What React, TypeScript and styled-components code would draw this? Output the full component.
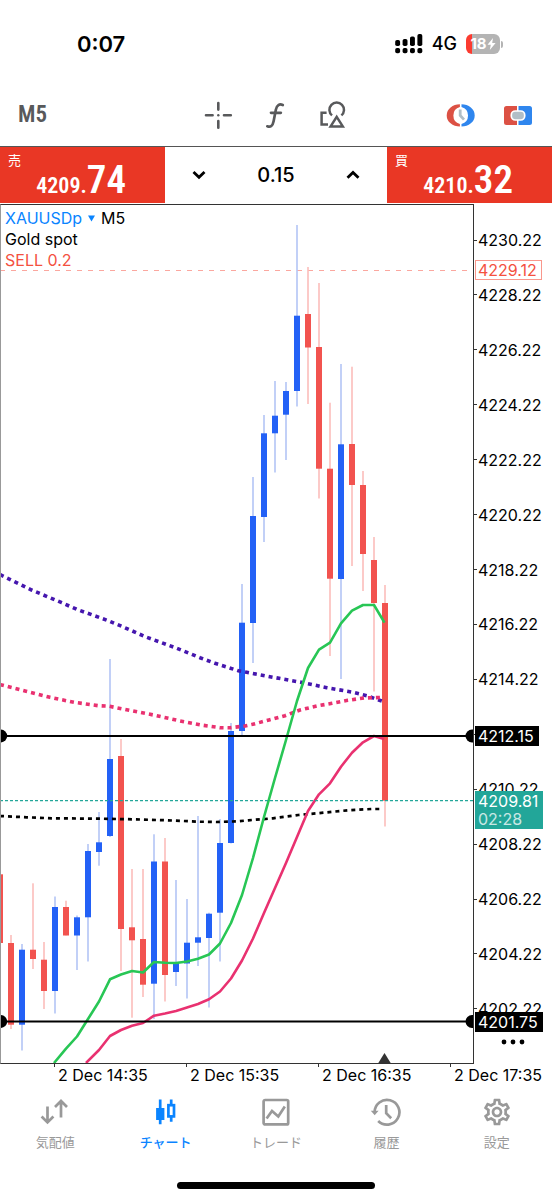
import React from 'react';
import styled, { createGlobalStyle } from 'styled-components';
import { MdOutlineSettings } from 'react-icons/md';

const SANS = `Inter, "Noto Sans CJK JP", sans-serif`;
const NARROW = `"Liberation Sans Narrow", "Roboto Condensed", Roboto, sans-serif`;

const GlobalStyle = createGlobalStyle`
  * { box-sizing: border-box; }
  body { margin: 0; background: #fff; color: #000; font-family: ${SANS}; }
  button, input { font: inherit; color: inherit; background: none; border: 0; padding: 0; margin: 0; border-radius: 0; }
  button { cursor: pointer; }
`;

const Screen = styled.main`
  width: 100%;
  overflow: hidden;
`;

const StatusBar = styled.header`
  display: flex;
  justify-content: space-between;
  align-items: center;
  height: 88px;
  padding: 0 49px 0 77px;
`;

const Clock = styled.time`
  font-size: 22px;
  font-weight: 600;
  line-height: 28px;
`;

const StatusGroup = styled.div`
  display: flex;
  align-items: center;
  gap: 9px;
`;

const Network = styled.span`
  font-size: 18px;
  font-weight: 500;
  line-height: 24px;
`;

const BatteryWrap = styled.div`
  display: flex;
  align-items: center;
  gap: 1px;
`;

const Battery = styled.div`
  display: flex;
  align-items: center;
  justify-content: center;
  width: 34px;
  height: 20px;
  border-radius: 6px;
  background: linear-gradient(90deg, #fb3b30 6px, #b4b4b4 6px);
  color: #fff;
  font-size: 15px;
  font-weight: 700;
  line-height: 20px;
`;

const BatteryTip = styled.i`
  width: 2px;
  height: 7px;
  border-radius: 0 2px 2px 0;
  background: #b4b4b4;
`;

const Toolbar = styled.nav`
  display: grid;
  grid-template-columns: 1fr auto 1fr;
  align-items: center;
  height: 58px;
  padding: 0 20px 4px 18px;
  color: #58595b;
`;

const Timeframe = styled.button`
  justify-self: start;
  font-family: ${NARROW};
  font-size: 23px;
  font-weight: 600;
  line-height: 28px;
`;

const ToolGroup = styled.div<{ $end?: boolean }>`
  display: flex;
  gap: 29px;
  justify-self: ${(p) => (p.$end ? 'end' : 'center')};
`;

const IconButton = styled.button`
  display: block;
  width: 28px;
  height: 28px;
  svg { display: block; overflow: visible; }
`;

const TradePanel = styled.section`
  display: grid;
  grid-template-columns: minmax(0, 165fr) minmax(0, 222fr) minmax(0, 165fr);
  grid-template-rows: 56px;
  border-top: 1px solid #555;
  padding-bottom: 1px;
`;

const QuoteButton = styled.button`
  display: flex;
  flex-direction: column;
  justify-content: flex-start;
  padding: 5px 39px 0 8px;
  background: #e93725;
  color: #fff;
  text-align: left;
`;

const QuoteSide = styled.span`
  height: 8px;
  font-size: 13px;
  line-height: 16px;
`;

const QuotePrice = styled.span`
  display: flex;
  justify-content: flex-end;
  align-items: baseline;
  width: 100%;
  font-family: ${NARROW};
  font-weight: 600;
  font-size: 22px;
  line-height: 40px;
`;

const Pips = styled.span`
  font-size: 39px;
`;

const VolumeBox = styled.div`
  display: flex;
  align-items: center;
  justify-content: space-between;
`;

const StepButton = styled.button`
  display: grid;
  place-items: center;
  flex: none;
  width: 68px;
  height: 48px;
`;

const VolumeInput = styled.input`
  flex: 1;
  width: 0;
  min-width: 0;
  text-align: center;
  font-size: 20px;
  font-weight: 500;
  line-height: 28px;
  outline: none;
`;

const ChartArea = styled.section`
  display: grid;
  grid-template-columns: 474fr 78fr;
`;

const Plot = styled.div`
  position: relative;
  border: 1px solid #333;
  border-left-color: #999;
  svg { display: block; width: 100%; height: auto; }
`;

const ChartHeading = styled.div`
  position: absolute;
  top: 3px;
  left: 4px;
  font-size: 16px;
  line-height: 21px;
`;

const SymbolButton = styled.button`
  display: flex;
  align-items: center;
  gap: 6px;
`;

const SymbolName = styled.span`
  color: #0a84ff;
`;

const OrderLabel = styled.div`
  color: #f4513f;
`;

const PriceAxis = styled.div`
  position: relative;
  display: flex;
  flex-direction: column;
  justify-content: space-between;
  padding: 26px 0 45px;
`;

const PriceLabel = styled.div`
  display: flex;
  align-items: center;
  gap: 1px;
  height: 20px;
  font-size: 16px;
  line-height: 20px;
  &::before { content: ''; width: 3px; height: 1px; background: #333; }
`;

const PriceTag = styled.div<{ $top: number; $bg: string; $ink?: string; $line?: string }>`
  position: absolute;
  top: ${(p) => p.$top}%;
  left: 1px;
  padding: 0 4px 0 2px;
  border: 1px solid ${(p) => p.$line ?? p.$bg};
  background: ${(p) => p.$bg};
  color: ${(p) => p.$ink ?? '#fff'};
  font-size: 16px;
  line-height: 18px;
`;

const Countdown = styled.div`
  opacity: 0.75;
`;

const MoreButton = styled.button`
  position: absolute;
  right: 25px;
  bottom: 12px;
  width: 28px;
  height: 20px;
  svg { display: block; }
`;

const TimeAxis = styled.div`
  display: grid;
  grid-template-columns: 54fr 132fr 132fr 132fr 102fr;
`;

const TimeLabel = styled.div`
  display: flex;
  gap: 3px;
  min-width: 0;
  font-size: 16px;
  line-height: 22px;
  white-space: nowrap;
  &::before { content: ''; flex: none; width: 1px; height: 3px; background: #333; }
`;

const TabBar = styled.nav`
  display: grid;
  grid-template-columns: repeat(5, 1fr);
  padding-top: 10px;
`;

const Tab = styled.button<{ $active?: boolean }>`
  display: flex;
  flex-direction: column;
  align-items: center;
  gap: 4px;
  color: ${(p) => (p.$active ? '#0a84ff' : '#999')};
  font-size: 13px;
  font-weight: ${(p) => (p.$active ? 500 : 400)};
  line-height: 20px;
`;

const HomeIndicator = styled.div`
  width: 36%;
  height: 7px;
  margin: 30px auto 11px;
  border-radius: 4px;
  background: #000;
`;

/* [wick top, body top, body bottom, wick bottom, rising] */
type Candle = [number, number, number, number, boolean];

const UP = true;
const DOWN = false;

const candles: Candle[] = [
  [874.3, 874.3, 943, 943, DOWN],
  [935, 943, 1024.7, 1029, DOWN],
  [944, 949.7, 1024.7, 1050.5, UP],
  [883.3, 949.7, 959, 969, DOWN],
  [942, 959.7, 991, 1009, DOWN],
  [896.5, 907, 991, 1013.5, UP],
  [900.7, 907, 935.5, 935.5, DOWN],
  [915.5, 917.3, 935.5, 970, UP],
  [844, 851, 917.3, 961.5, UP],
  [812, 842.3, 852, 865.7, UP],
  [659, 759, 836, 837, UP],
  [739, 756, 929, 971, DOWN],
  [869, 927.3, 940.3, 1017.7, DOWN],
  [869, 939, 984.7, 997, DOWN],
  [834.3, 861.5, 983.7, 1019, UP],
  [838, 861.5, 975, 1001.5, DOWN],
  [880, 963, 972, 986, UP],
  [899, 942.7, 963.5, 998.5, UP],
  [816, 937.3, 942.7, 966, UP],
  [912.7, 913.7, 938, 1007.5, UP],
  [819, 843, 912.7, 961.5, UP],
  [723, 731, 843, 843.5, UP],
  [584, 622.7, 731, 735, UP],
  [477, 516, 623, 663, UP],
  [415, 433.3, 517, 542, UP],
  [381, 415.7, 433.3, 472.5, UP],
  [382, 391, 414.7, 460, UP],
  [225, 315.7, 391, 406.5, UP],
  [267, 314, 347.5, 404, DOWN],
  [283, 347, 468.7, 498.5, DOWN],
  [402.7, 468.7, 578.7, 656, DOWN],
  [364, 444.3, 579, 679, UP],
  [366.7, 444, 485, 566, DOWN],
  [471, 485, 554, 591, DOWN],
  [537, 560, 603, 691.5, DOWN],
  [585, 603, 800.7, 826.5, DOWN],
];

const fastAverage =
  '54,1063 66,1048.6 77,1036.5 88,1019 99,1001.5 110,979.3 121,974.5 132,971 143,972.5 154,962 165,962.7 176,963 187,961.5 198,958.7 209,954.5 220,943.5 231,923 242,895 253,858 264,817 275,778 286,740 297,701 308,668 319,649.7 330,642.7 341,623.3 352,610.7 363,605 374,605 384.5,622.7';
const slowAverage =
  '86,1063 99,1050 110,1036 121,1030 132,1025.7 143,1023 154,1015.7 165,1013.5 176,1011 187,1007.5 198,1004 209,999.3 220,991.5 231,978.5 242,960.5 253,938.5 264,913 275,888 286,863 297,837 308,811 319,794.3 330,783.3 341,766.7 352,752.7 363,742.3 374,736 384,739';
const purpleAverage =
  '0,574.6 31.7,590 61.7,602.7 76.7,609.3 108.3,620.7 123.3,627 146,637 176.7,648.3 200,657.7 215,663.3 238.3,670.7 246.7,672.3 273.3,677.3 303.3,682.7 326.7,687.7 351.7,692 366.7,695.7 375,698.7 385,702';
const pinkAverage =
  '0,684.6 26,691.3 50,697.3 74,702.3 98.3,705.7 109,706.2 123,709 155,715.3 179,720.7 203,725.3 220,727.7 230,727.8 245,726 252.7,724.3 269,720 285,715.7 300,710 316.7,706 332,703.3 347.7,700.3 364,698 384,697.3';
const blackAverage =
  '0,816 26.7,817.3 51.7,818.3 100,818.7 133,819.3 166.7,820.3 200,821.7 216.7,822 238,821.3 248.3,820.3 273,818.3 298.3,815 323.3,812.7 348,810.3 371.7,809 383,809';

const levels = [736, 1021.5];

const CandleChart = () => (
  <svg viewBox="1 205 472 858" role="img" aria-label="XAUUSDp M5">
    <line x1="0" x2="474" y1="270.5" y2="270.5" stroke="#fba79f" strokeDasharray="5 6" />
    {candles.map(([high, top, bottom, low, rising], i) => {
      const x = i * 11;
      return (
        <g key={x}>
          <rect x={x - 0.8} y={high} width={1.6} height={low - high} fill={rising ? '#b3c5f5' : '#fcbdbb'} />
          <rect x={x - 3} y={top} width={6} height={bottom - top} fill={rising ? '#2361f6' : '#f2534f'} />
        </g>
      );
    })}
    <g fill="none">
      <polyline points={purpleAverage} stroke="#4516ae" strokeWidth="3.6" strokeDasharray="4 4" />
      <polyline points={pinkAverage} stroke="#e93170" strokeWidth="3.6" strokeDasharray="4 4" />
      <polyline points={blackAverage} stroke="#000" strokeWidth="2.7" strokeDasharray="4 4" />
      <polyline points={slowAverage} stroke="#e93170" strokeWidth="2.6" strokeLinejoin="round" />
      <polyline points={fastAverage} stroke="#28c655" strokeWidth="2.6" strokeLinejoin="round" />
    </g>
    <line x1="0" x2="474" y1="800.7" y2="800.7" stroke="#22a699" strokeWidth="1.3" strokeDasharray="3 2" />
    {levels.map((y) => (
      <g key={y}>
        <line x1="0" x2="474" y1={y} y2={y} stroke="#000" strokeWidth="1.8" />
        <circle cx="0.7" cy={y} r="6.5" />
        <circle cx="472" cy={y} r="6.5" />
      </g>
    ))}
    <path d="M384.5 1053L391 1063.5H378Z" fill="#333" />
  </svg>
);

const prices = Array.from({ length: 15 }, (_, i) => (4230.22 - i * 2).toFixed(2));
/* this step lies under the 4212.15 level tag, so only its tick is drawn */
const coveredPrice = '4212.22';
const times = ['2 Dec 14:35', '2 Dec 15:35', '2 Dec 16:35', '2 Dec 17:35'];

const SignalIcon = () => (
  <svg width="28" height="20" viewBox="0 0 28 20" aria-hidden="true">
    {[6, 5, 2.5, 0].map((y, i) => (
      <g key={y}>
        <rect x={0.2 + i * 7.4} y={y} width="4.9" height={12 - y} rx="1.8" />
        <rect x={0.2 + i * 7.4} y="14" width="4.9" height="5.2" rx="1.8" />
      </g>
    ))}
  </svg>
);

const BoltIcon = () => (
  <svg width="9" height="12" viewBox="0 0 9 12" fill="#fff" aria-hidden="true">
    <path d="M6 0L0.5 6.8H3.8L2.8 12L8.6 4.9H5.2Z" />
  </svg>
);

const CrosshairIcon = () => (
  <svg width="28" height="28" viewBox="0 0 28 28" fill="none" stroke="currentColor" strokeWidth="2.6" strokeLinecap="round">
    <path d="M14.3 2v6.6M14.3 20v6.8M2 14.3h6.6M20 14.3h6.8" />
    <circle cx="14.3" cy="14.3" r="1.2" fill="currentColor" stroke="none" />
  </svg>
);

const FunctionIcon = () => (
  <svg width="28" height="28" viewBox="0 0 28 28" fill="none" stroke="currentColor" strokeWidth="2.7" strokeLinecap="round">
    <path d="M6.3 25.3C9.6 26.6 11.6 25 12.6 20.2L14.9 8.6C15.8 4 18.4 2.6 21.8 4" />
    <path d="M10 11.8H19.8" />
  </svg>
);

const ObjectsIcon = () => (
  <svg width="28" height="28" viewBox="0 0 28 28" fill="none" stroke="currentColor" strokeWidth="2.5">
    <path d="M8.6 11.8H3.6V23.4H10" />
    <path d="M14 14.4A7.3 7.3 0 1 1 23.4 14.4" />
    <path d="M18.7 15.8L24.8 25.4H12.6Z" />
  </svg>
);

const SessionsIcon = () => (
  <svg width="28" height="28" viewBox="0 0 28 28">
    <path d="M12.9 3.2A13.2 11.2 0 0 0 12.9 25.6V22.9A8.8 8.8 0 0 1 12.9 5.9Z" fill="#dc5144" />
    <path d="M14.5 3.2A13.2 11.2 0 0 1 14.5 25.6V22.9A8.8 8.8 0 0 0 14.5 5.9Z" fill="#2f86ee" />
    <path d="M13.2 8.5V14.5L17 18.6" fill="none" stroke="#b1bec6" strokeWidth="2.8" />
  </svg>
);

const OneClickIcon = () => (
  <svg width="28" height="28" viewBox="0 0 28 28">
    <path d="M2.5 5H13V24H2.5A2.5 2.5 0 0 1 0 21.5V7.5A2.5 2.5 0 0 1 2.5 5Z" fill="#dc5144" />
    <path d="M14.5 5H25.5A2.5 2.5 0 0 1 28 7.5V21.5A2.5 2.5 0 0 1 25.5 24H14.5Z" fill="#2f86ee" />
    <rect x="7.3" y="10" width="13.4" height="9" rx="4" fill="#b1bec6" stroke="#fff" strokeWidth="1.7" />
  </svg>
);

const Chevron = ({ up }: { up?: boolean }) => (
  <svg width="14" height="10" viewBox="0 0 14 10" fill="none" stroke="#000" strokeWidth="2.8">
    <path d={up ? 'M1.5 7.8L7 2.5L12.5 7.8' : 'M1.5 2L7 7.3L12.5 2'} />
  </svg>
);

const TabIcon = ({ children }: { children: React.ReactNode }) => (
  <svg width="32" height="32" viewBox="-2 -2 32 32" fill="none" stroke="currentColor" strokeWidth="2.7" aria-hidden="true">
    {children}
  </svg>
);

const QuotesIcon = () => (
  <TabIcon>
    <path d="M6.5 8.5V25M0.6 18.5L6.5 24.4L12.4 18.5M20 19.5V3M14 9L20 3L26 9" />
  </TabIcon>
);

const ChartIcon = () => (
  <TabIcon>
    <path d="M8.2 1.5V26.3M19.2 1.5V7M19.2 19V23.7" />
    <rect x="4.1" y="10" width="8.3" height="12" fill="currentColor" stroke="none" />
    <rect x="16.4" y="7.2" width="5.6" height="11.2" />
  </TabIcon>
);

const TradeIcon = () => (
  <TabIcon>
    <rect x="1.6" y="2" width="24.6" height="24.4" rx="1.5" />
    <path d="M4.6 20.5L10 13L16.3 18.5L22.8 8.5" />
  </TabIcon>
);

const HistoryIcon = () => (
  <TabIcon>
    <path d="M2.6 14.4A12.4 12.4 0 1 1 6.2 23" />
    <path d="M-1.2 12.8H6.6L2.7 17.2Z" fill="currentColor" stroke="none" />
    <path d="M14.2 7V15.2L19.2 20.2" />
  </TabIcon>
);

const tabs = [
  { label: '気配値', icon: <QuotesIcon /> },
  { label: 'チャート', icon: <ChartIcon />, active: true },
  { label: 'トレード', icon: <TradeIcon /> },
  { label: '履歴', icon: <HistoryIcon /> },
  { label: '設定', icon: <MdOutlineSettings size={32} aria-hidden="true" /> },
];

const TriangleSvg = styled.svg`
  flex: none;
  max-width: 7px;
  fill: #0a84ff;
`;

const DownTriangle = () => (
  <TriangleSvg viewBox="0 0 7 7" aria-hidden="true">
    <path d="M0 0.5H7L3.5 6.5Z" />
  </TriangleSvg>
);

const Quote = ({ side, price, pips }: { side: string; price: string; pips: string }) => (
  <QuoteButton>
    <QuoteSide>{side}</QuoteSide>
    <QuotePrice>
      {price}
      <Pips>{pips}</Pips>
    </QuotePrice>
  </QuoteButton>
);

export default function App() {
  return (
    <Screen>
      <GlobalStyle />
      <StatusBar>
        <Clock>0:07</Clock>
        <StatusGroup>
          <SignalIcon />
          <Network>4G</Network>
          <BatteryWrap>
            <Battery>
              18
              <BoltIcon />
            </Battery>
            <BatteryTip />
          </BatteryWrap>
        </StatusGroup>
      </StatusBar>

      <Toolbar>
        <Timeframe>M5</Timeframe>
        <ToolGroup>
          <IconButton aria-label="Crosshair"><CrosshairIcon /></IconButton>
          <IconButton aria-label="Indicators"><FunctionIcon /></IconButton>
          <IconButton aria-label="Objects"><ObjectsIcon /></IconButton>
        </ToolGroup>
        <ToolGroup $end>
          <IconButton aria-label="Sessions"><SessionsIcon /></IconButton>
          <IconButton aria-label="One click trading"><OneClickIcon /></IconButton>
        </ToolGroup>
      </Toolbar>

      <TradePanel>
        <Quote side="売" price="4209." pips="74" />
        <VolumeBox>
          <StepButton aria-label="Decrease volume"><Chevron /></StepButton>
          <VolumeInput aria-label="Volume" defaultValue="0.15" />
          <StepButton aria-label="Increase volume"><Chevron up /></StepButton>
        </VolumeBox>
        <Quote side="買" price="4210." pips="32" />
      </TradePanel>

      <ChartArea>
        <Plot>
          <CandleChart />
          <ChartHeading>
            <SymbolButton>
              <SymbolName>XAUUSDp</SymbolName>
              <DownTriangle />
              M5
            </SymbolButton>
            <div>Gold spot</div>
            <OrderLabel>SELL 0.2</OrderLabel>
          </ChartHeading>
        </Plot>
        <PriceAxis>
          {prices.map((price) => (
            <PriceLabel key={price}>{price === coveredPrice ? null : price}</PriceLabel>
          ))}
          <PriceTag $top={6.5} $bg="#fff" $ink="#f4513f" $line="#f9978c">4229.12</PriceTag>
          <PriceTag $top={60.7} $bg="#000">4212.15</PriceTag>
          <PriceTag $top={68.2} $bg="#22a699">
            4209.81
            <Countdown>02:28</Countdown>
          </PriceTag>
          <PriceTag $top={93.9} $bg="#000">4201.75</PriceTag>
          <MoreButton aria-label="More">
            <svg width="28" height="20" viewBox="0 0 28 20">
              <circle cx="5" cy="10" r="2.4" />
              <circle cx="14" cy="10" r="2.4" />
              <circle cx="23" cy="10" r="2.4" />
            </svg>
          </MoreButton>
        </PriceAxis>
      </ChartArea>

      <TimeAxis>
        <span />
        {times.map((time) => (
          <TimeLabel key={time}>{time}</TimeLabel>
        ))}
      </TimeAxis>

      <TabBar>
        {tabs.map((tab) => (
          <Tab key={tab.label} $active={tab.active} aria-current={tab.active ? 'page' : undefined}>
            {tab.icon}
            {tab.label}
          </Tab>
        ))}
      </TabBar>
      <HomeIndicator />
    </Screen>
  );
}
